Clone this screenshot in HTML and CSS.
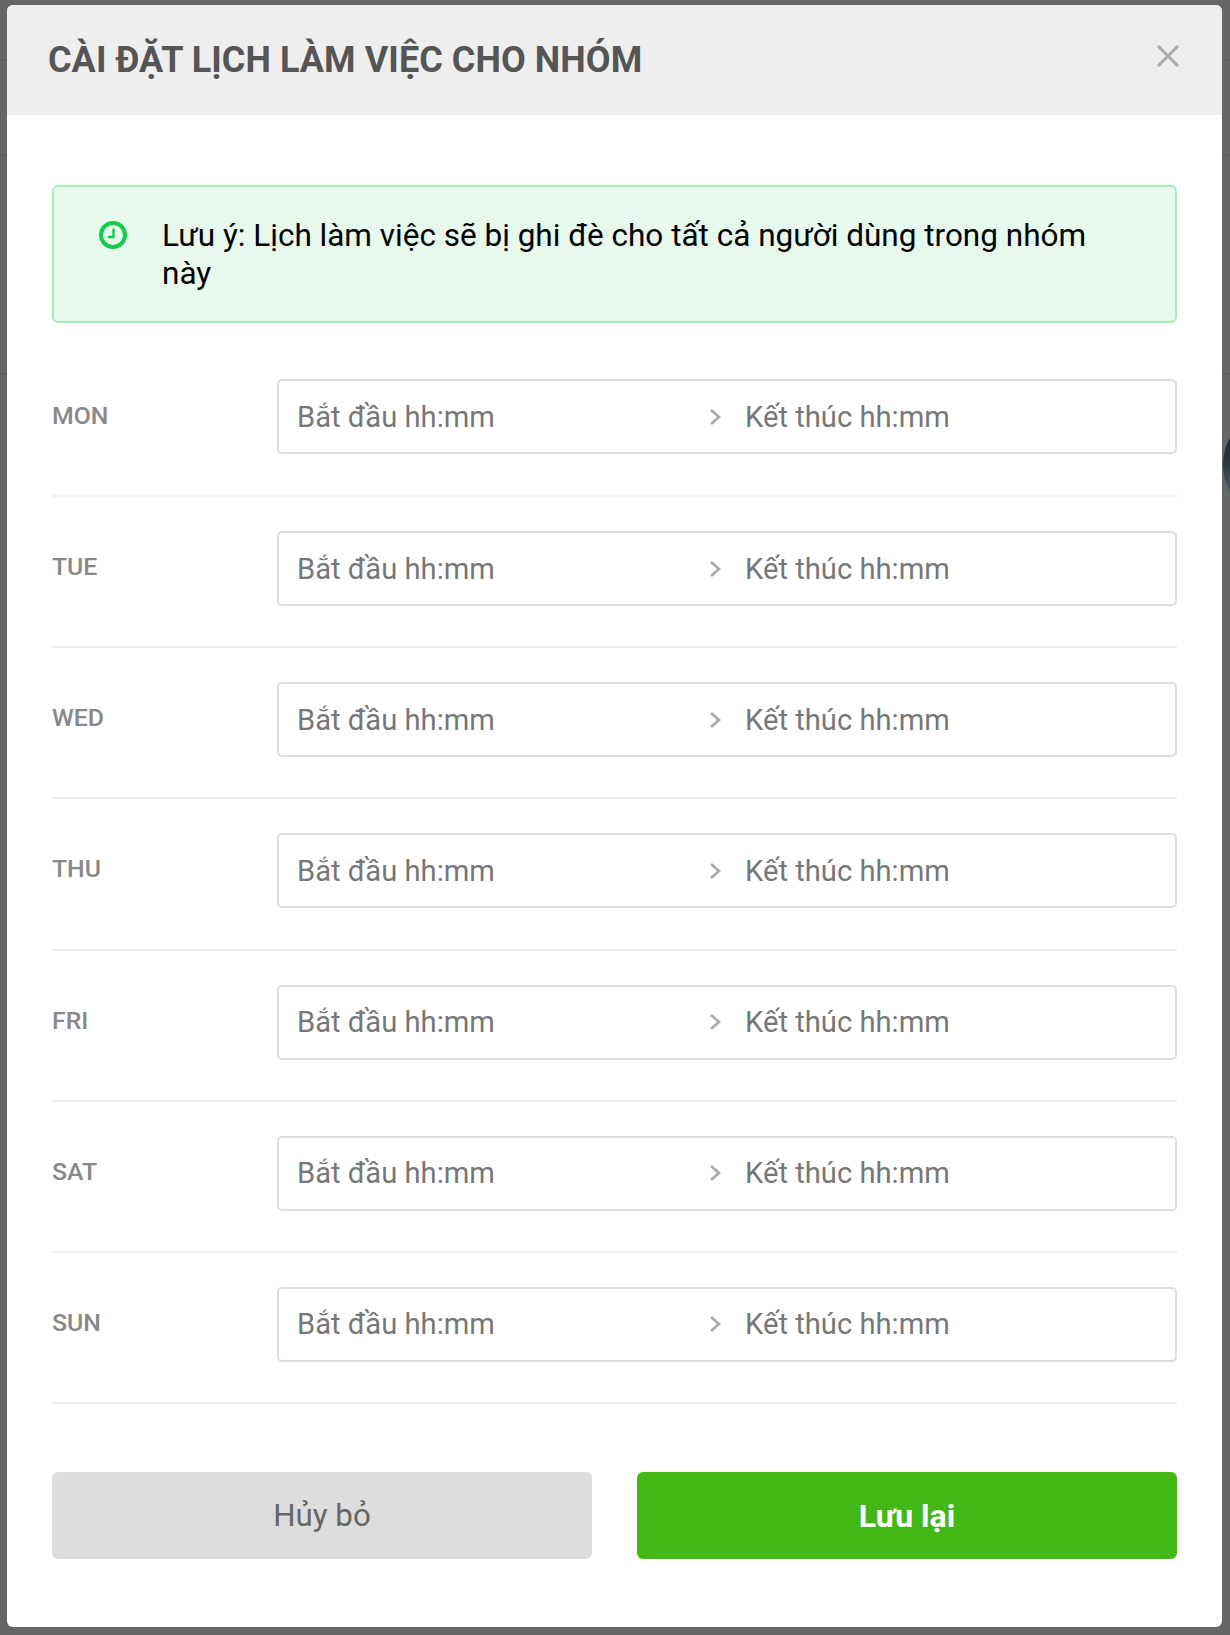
FILE: index.html
```html
<!DOCTYPE html>
<html lang="vi">
<head>
<meta charset="utf-8">
<title>Cài đặt lịch làm việc</title>
<link rel="stylesheet" href="styles.css">
</head>
<body>
<div class="backdrop">
  <span class="bg-line bg-line-a"></span>
  <span class="bg-line bg-line-b"></span>
  <span class="bg-line bg-line-c"></span>
  <span class="bg-avatar"></span>
  <div class="modal">
    <header class="modal-head">
      <h1 class="modal-title">CÀI ĐẶT LỊCH LÀM VIỆC CHO NHÓM</h1>
      <svg class="close" viewBox="0 0 22 22" aria-hidden="true"><path d="M1 1 21 21M21 1 1 21"/></svg>
    </header>
    <div class="modal-body">
      <div class="alert">
        <svg class="alert-icon" viewBox="0 0 28 28" aria-hidden="true"><circle class="clock-ring" cx="14" cy="14" r="12"/><path class="clock-hand" d="M14.5 7.5v8.5H9"/></svg>
        <p class="alert-text">Lưu ý: Lịch làm việc sẽ bị ghi đè cho tất cả người dùng trong nhóm này</p>
      </div>
      <div class="row"><div class="day">MON</div><div class="range"><span class="ph start">Bắt đầu hh:mm</span><svg class="chev" viewBox="0 0 12 18" aria-hidden="true"><path d="M2 2l8 7-8 7"/></svg><span class="ph">Kết thúc hh:mm</span></div></div>
      <div class="row"><div class="day">TUE</div><div class="range"><span class="ph start">Bắt đầu hh:mm</span><svg class="chev" viewBox="0 0 12 18" aria-hidden="true"><path d="M2 2l8 7-8 7"/></svg><span class="ph">Kết thúc hh:mm</span></div></div>
      <div class="row"><div class="day">WED</div><div class="range"><span class="ph start">Bắt đầu hh:mm</span><svg class="chev" viewBox="0 0 12 18" aria-hidden="true"><path d="M2 2l8 7-8 7"/></svg><span class="ph">Kết thúc hh:mm</span></div></div>
      <div class="row"><div class="day">THU</div><div class="range"><span class="ph start">Bắt đầu hh:mm</span><svg class="chev" viewBox="0 0 12 18" aria-hidden="true"><path d="M2 2l8 7-8 7"/></svg><span class="ph">Kết thúc hh:mm</span></div></div>
      <div class="row"><div class="day">FRI</div><div class="range"><span class="ph start">Bắt đầu hh:mm</span><svg class="chev" viewBox="0 0 12 18" aria-hidden="true"><path d="M2 2l8 7-8 7"/></svg><span class="ph">Kết thúc hh:mm</span></div></div>
      <div class="row"><div class="day">SAT</div><div class="range"><span class="ph start">Bắt đầu hh:mm</span><svg class="chev" viewBox="0 0 12 18" aria-hidden="true"><path d="M2 2l8 7-8 7"/></svg><span class="ph">Kết thúc hh:mm</span></div></div>
      <div class="row"><div class="day">SUN</div><div class="range"><span class="ph start">Bắt đầu hh:mm</span><svg class="chev" viewBox="0 0 12 18" aria-hidden="true"><path d="M2 2l8 7-8 7"/></svg><span class="ph">Kết thúc hh:mm</span></div></div>
      <div class="actions">
        <button class="btn btn-cancel" type="button">Hủy bỏ</button>
        <button class="btn btn-save" type="button">Lưu lại</button>
      </div>
    </div>
  </div>
</div>
</body>
</html>
```
FILE: styles.css
```css
* { box-sizing: border-box; }
html, body { margin: 0; padding: 0; }
body { font-family: Roboto, "Liberation Sans", sans-serif; background: #666; }
.backdrop { position: relative; width: 1230px; height: 1635px; padding: 5px 8px 8px 7px; background: #666; overflow: hidden; }
.bg-line { position: absolute; left: 0; right: 0; height: 2px; background: #606060; }
.bg-line-a { top: 59px; }
.bg-line-b { top: 154px; }
.bg-line-c { top: 373px; }
.bg-avatar { position: absolute; left: 1223px; top: 408px; width: 114px; height: 114px; border-radius: 50%; background: linear-gradient(180deg, #1f2a30 0%, #26343a 45%, #3d5a62 70%, #3d5a62 100%); }
.modal { position: relative; width: 1215px; height: 1622px; background: #fff; border-radius: 6px; overflow: hidden; }
.modal-head { height: 110px; background: #eee; padding: 0 41px; position: relative; display: flex; align-items: center; }
.modal-title { margin: 0; font-size: 36px; letter-spacing: 0.07px; line-height: 42px; font-weight: 700; color: #555; }
.close { position: absolute; right: 43px; top: 40px; width: 22px; height: 22px; fill: none; stroke: #aaa; stroke-width: 3; }
.modal-body { padding: 70px 45px 0; }
.alert { display: flex; height: 138px; padding: 30px 40px 0 45px; background: #e7f8ec; border: 2px solid #a6ecb9; border-radius: 6px; margin-bottom: 56px; }
.alert-icon { flex: none; width: 28px; height: 28px; margin: 4px 35px 0 0; fill: none; stroke: #12cc4a; }
.clock-ring { stroke-width: 4; }
.clock-hand { stroke-width: 2.4; }
.alert-text { margin: 0; font-size: 31.5px; line-height: 38px; color: #000; }
.row { display: flex; height: 118px; border-bottom: 2px solid #eee; }
.row + .row { height: 151.2px; padding-top: 34px; }
.day { width: 225px; padding-top: 21px; font-size: 24.8px; line-height: 32px; font-weight: 500; color: #888; }
.row + .row .day { padding-top: 20px; }
.range { flex: 1; height: 75px; display: flex; align-items: center; padding: 0 18px; border: 2px solid #ddd; border-radius: 5px; }
.ph { font-size: 29.2px; color: #777; }
.start { width: 412px; }
.chev { flex: none; width: 12px; height: 18px; margin-right: 24px; fill: none; stroke: #aaa; stroke-width: 2.8; }
.actions { display: flex; justify-content: space-between; margin-top: 68px; }
.btn { width: 540px; height: 87px; border: 0; border-radius: 6px; font-family: inherit; }
.btn-cancel { background: #ddd; color: #666; font-size: 31.3px; }
.btn-save { background: #43b814; color: #fff; font-weight: 700; font-size: 32px; }
```
